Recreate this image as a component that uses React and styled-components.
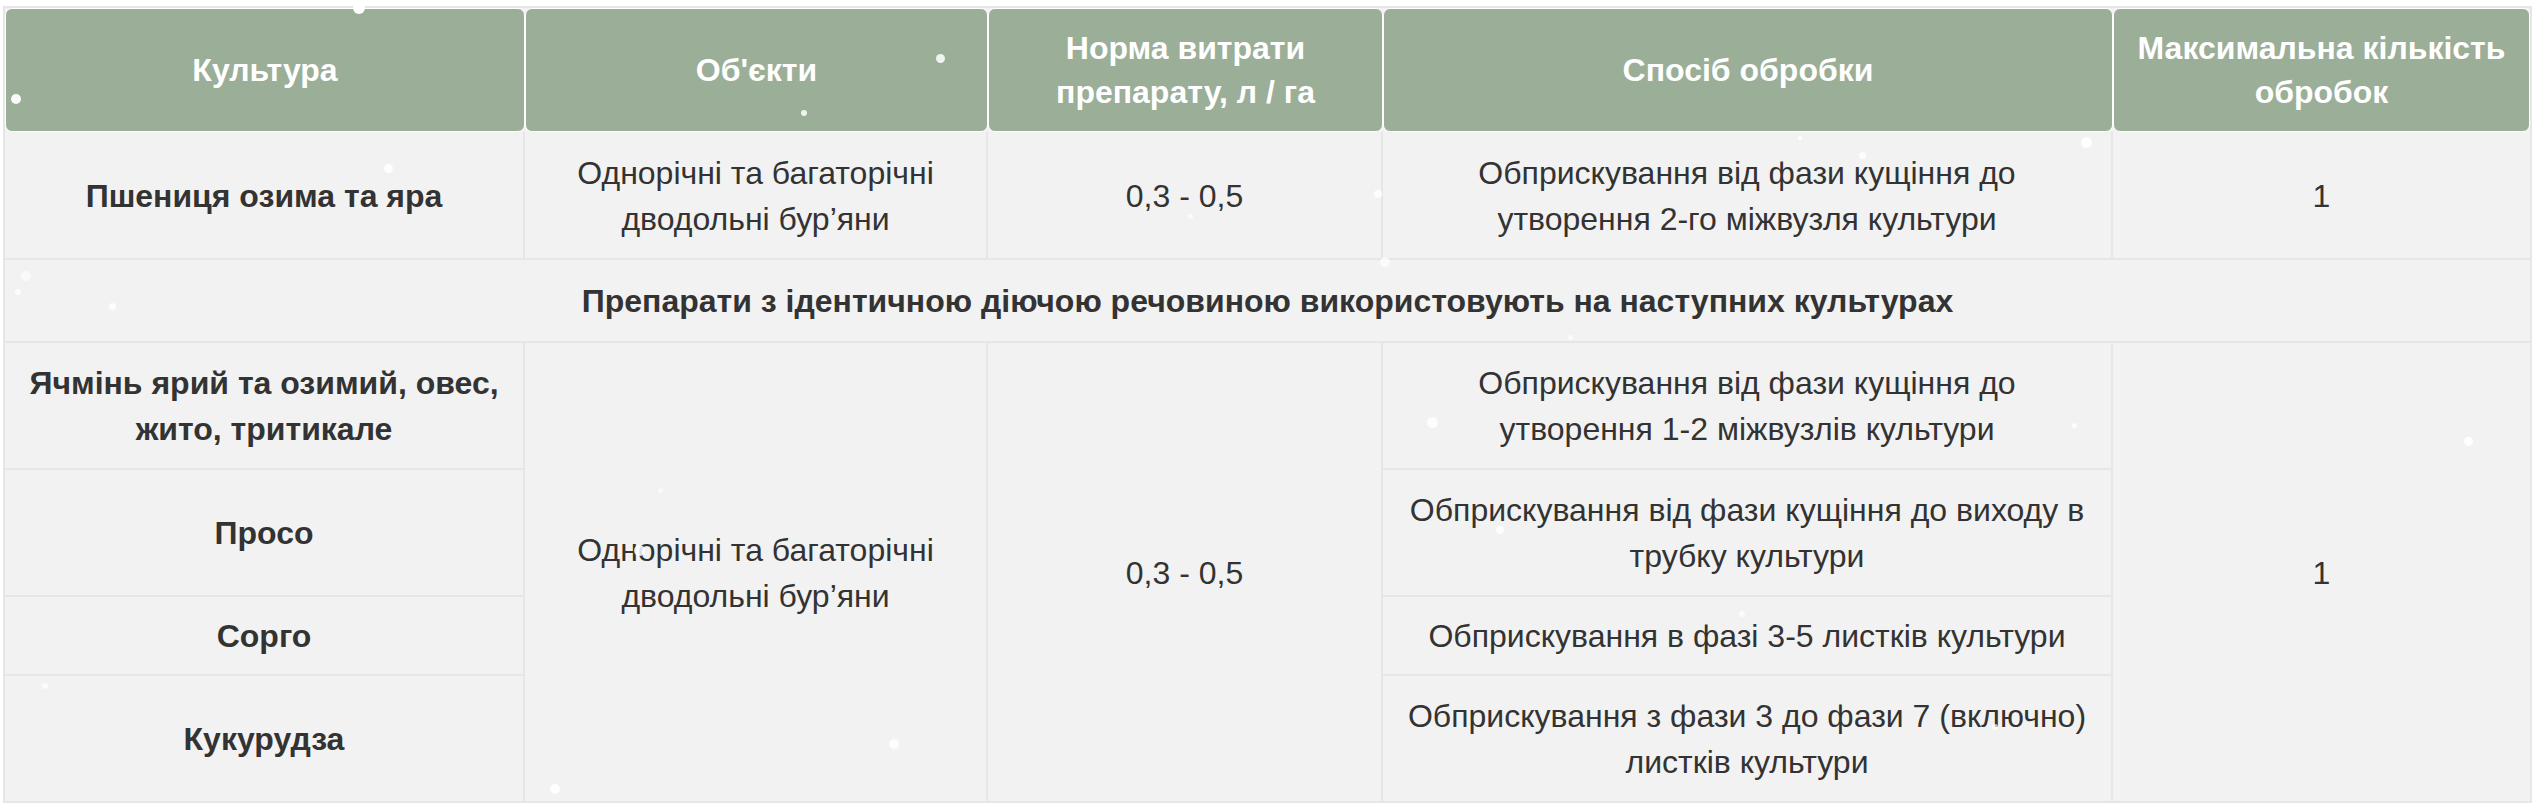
import React from "react";
import styled, { createGlobalStyle } from "styled-components";

const Global = createGlobalStyle`
  html, body { margin: 0; padding: 0; background: #ffffff; }
  body { font-family: "Liberation Sans", Arial, sans-serif; }
`;

const Page = styled.div`
  position: relative;
  padding: 6px 8px 0 3px;
`;

const Table = styled.table`
  width: 2525px;
  table-layout: fixed;
  border-collapse: separate;
  border-spacing: 0;
  border: 2px solid #e6e6e6;
  background: #f2f2f2;
  font-family: "Liberation Sans", Arial, sans-serif;
  font-size: 32px;
  color: #333333;
`;

const Th = styled.th`
  background: #9bae97;
  color: #ffffff;
  font-weight: 700;
  font-size: 32px;
  line-height: 44px;
  padding: 17px 10px;
  border: 1px solid #ffffff;
  border-radius: 7px;
  text-align: center;
  vertical-align: middle;
`;

const Row = styled.tr`
  & > td {
    padding: ${(p) => p.$pad || "17px 10px 16px"};
  }
`;

const Td = styled.td`
  background: #f2f2f2;
  line-height: 46px;
  text-align: center;
  vertical-align: middle;
  font-weight: ${(p) => (p.$bold ? 700 : 400)};
  border-right: ${(p) => (p.$last ? "none" : "2px solid #e6e6e6")};
  border-bottom: ${(p) => (p.$end ? "none" : "2px solid #e6e6e6")};
`;

const Snow = styled.span`
  position: absolute;
  border-radius: 50%;
  background: #ffffff;
  pointer-events: none;
`;

const flakes = [
  [359, 8, 12, 1],
  [16, 99, 10, 0.95],
  [940, 58, 9, 0.85],
  [804, 113, 6, 0.85],
  [388, 168, 9, 0.9],
  [2086, 142, 11, 0.95],
  [1862, 155, 7, 0.85],
  [1800, 138, 4, 0.8],
  [112, 306, 7, 0.8],
  [18, 292, 6, 0.7],
  [26, 276, 10, 0.6],
  [1500, 530, 8, 0.8],
  [2468, 441, 9, 0.95],
  [639, 550, 11, 0.85],
  [555, 789, 10, 0.9],
  [894, 744, 10, 0.8],
  [1385, 262, 10, 0.7],
  [1378, 194, 8, 0.85],
  [45, 686, 6, 0.7],
  [2074, 425, 5, 0.8],
  [1432, 422, 11, 0.8],
  [660, 490, 5, 0.6],
  [1995, 727, 6, 0.7],
  [1742, 614, 6, 0.6],
  [1570, 337, 5, 0.7],
  [1190, 216, 5, 0.7],
];

export default function App() {
  return (
    <Page>
      <Global />
      <Table>
        <colgroup>
          <col style={{ width: 520 }} />
          <col style={{ width: 463 }} />
          <col style={{ width: 395 }} />
          <col style={{ width: 730 }} />
          <col style={{ width: 417 }} />
        </colgroup>
        <thead>
          <tr>
            <Th>Культура</Th>
            <Th>Об'єкти</Th>
            <Th>
              Норма витрати
              <br />
              препарату, л / га
            </Th>
            <Th>Спосіб обробки</Th>
            <Th>
              Максимальна кількість
              <br />
              обробок
            </Th>
          </tr>
        </thead>
        <tbody>
          <Row $pad="18px 10px 16px">
            <Td $bold>Пшениця озима та яра</Td>
            <Td>
              Однорічні та багаторічні
              <br />
              дводольні бур’яни
            </Td>
            <Td>0,3 - 0,5</Td>
            <Td>
              Обприскування від фази кущіння до
              <br />
              утворення 2-го міжвузля культури
            </Td>
            <Td $last>1</Td>
          </Row>
          <Row $pad="18px 10px 17px">
            <Td $bold $last colSpan={5}>
              Препарати з ідентичною діючою речовиною використовують на наступних культурах
            </Td>
          </Row>
          <Row>
            <Td $bold>
              Ячмінь ярий та озимий, овес,
              <br />
              жито, тритикале
            </Td>
            <Td rowSpan={4} $end>
              Однорічні та багаторічні
              <br />
              дводольні бур’яни
            </Td>
            <Td rowSpan={4} $end>0,3 - 0,5</Td>
            <Td>
              Обприскування від фази кущіння до
              <br />
              утворення 1-2 міжвузлів культури
            </Td>
            <Td rowSpan={4} $last $end>1</Td>
          </Row>
          <Row>
            <Td $bold>Просо</Td>
            <Td>
              Обприскування від фази кущіння до виходу в
              <br />
              трубку культури
            </Td>
          </Row>
          <Row $pad="16px 10px 15px">
            <Td $bold>Сорго</Td>
            <Td>Обприскування в фазі 3-5 листків культури</Td>
          </Row>
          <Row>
            <Td $bold $end>Кукурудза</Td>
            <Td $end>
              Обприскування з фази 3 до фази 7 (включно)
              <br />
              листків культури
            </Td>
          </Row>
        </tbody>
      </Table>
      {flakes.map(([x, y, s, o], i) => (
        <Snow
          key={i}
          style={{ left: x - s / 2, top: y - s / 2, width: s, height: s, opacity: o }}
        />
      ))}
    </Page>
  );
}
